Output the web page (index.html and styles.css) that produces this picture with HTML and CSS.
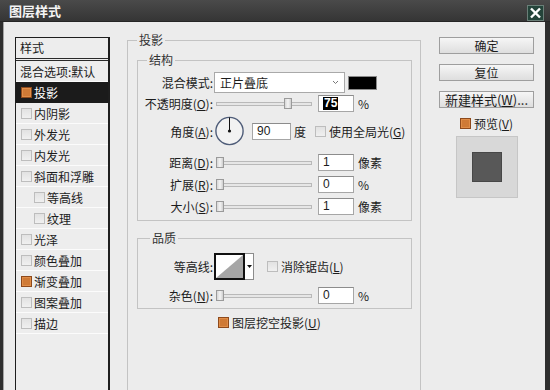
FILE: index.html
```html
<!DOCTYPE html>
<html lang="zh">
<head>
  <meta charset="UTF-8" />
  <title>图层样式</title>
  <link rel="stylesheet" href="styles.css">
</head>
<body>

  <!-- Title bar -->
  <div class="titlebar">
    <span class="title">图层样式</span>
    <span class="close">
      <svg width="13" height="12" viewBox="0 0 13 12">
        <path d="M2 1.5 L11 10.5 M11 1.5 L2 10.5" stroke="#fff" stroke-width="2.4" />
      </svg>
    </span>
  </div>

  <div class="dialog">

    <!-- Left: style list -->
    <div class="styles-list">
      <div class="list-head">样式</div>
      <div class="list-item">混合选项:默认</div>
      <div class="list-item selected"><span class="check on"></span>投影</div>
      <div class="list-item"><span class="check"></span>内阴影</div>
      <div class="list-item"><span class="check"></span>外发光</div>
      <div class="list-item"><span class="check"></span>内发光</div>
      <div class="list-item"><span class="check"></span>斜面和浮雕</div>
      <div class="list-item sub"><span class="check"></span>等高线</div>
      <div class="list-item sub"><span class="check"></span>纹理</div>
      <div class="list-item"><span class="check"></span>光泽</div>
      <div class="list-item"><span class="check"></span>颜色叠加</div>
      <div class="list-item"><span class="check on"></span>渐变叠加</div>
      <div class="list-item"><span class="check"></span>图案叠加</div>
      <div class="list-item"><span class="check"></span>描边</div>
    </div>

    <!-- Middle: drop shadow settings -->
    <div class="main">
      <fieldset class="group outer">
        <legend>投影</legend>

        <fieldset class="group structure">
          <legend>结构</legend>

          <div class="row row-blend">
            <span class="lbl">混合模式:</span>
            <div class="select">正片叠底
              <svg class="select-arrow" width="7" height="5" viewBox="0 0 7 5">
                <path d="M1 1 L3.5 3.5 L6 1" fill="none" stroke="#777" stroke-width="1" />
              </svg>
            </div>
            <span class="swatch"></span>
          </div>

          <div class="row row-opacity">
            <span class="lbl">不透明度(<u>O</u>):</span>
            <div class="slider"><span class="track"></span><span class="thumb" style="left: 68px"></span></div>
            <div class="field"><span class="sel-text">75</span></div>
            <span class="unit">%</span>
          </div>

          <div class="row row-angle">
            <span class="lbl">角度(<u>A</u>):</span>
            <svg class="dial" width="29" height="30" viewBox="0 0 29 30">
              <circle cx="14.5" cy="15" r="13.6" fill="#f2f2f2" stroke="#4e5c78" stroke-width="1.4" />
              <line x1="14.5" y1="15" x2="14.5" y2="1.5" stroke="#111" stroke-width="1" />
              <circle cx="14.5" cy="15" r="1.6" fill="#111" />
            </svg>
            <div class="field angle-field">90</div>
            <span class="unit">度</span>
            <span class="check global-check"></span>
            <span class="check-text">使用全局光(<u>G</u>)</span>
          </div>

          <div class="row row-slider first">
            <span class="lbl">距离(<u>D</u>):</span>
            <div class="slider"><span class="track"></span><span class="thumb" style="left: 0px"></span></div>
            <div class="field">1</div>
            <span class="unit">像素</span>
          </div>

          <div class="row row-slider">
            <span class="lbl">扩展(<u>R</u>):</span>
            <div class="slider"><span class="track"></span><span class="thumb" style="left: 0px"></span></div>
            <div class="field">0</div>
            <span class="unit">%</span>
          </div>

          <div class="row row-slider">
            <span class="lbl">大小(<u>S</u>):</span>
            <div class="slider"><span class="track"></span><span class="thumb" style="left: 0px"></span></div>
            <div class="field">1</div>
            <span class="unit">像素</span>
          </div>
        </fieldset>

        <fieldset class="group quality">
          <legend>品质</legend>

          <div class="row row-contour">
            <span class="lbl">等高线:</span>
            <div class="contour">
              <svg class="curve" width="27" height="23" viewBox="0 0 27 23">
                <rect width="27" height="23" fill="#fff" />
                <polygon points="0,23 27,0 27,23" fill="#a6a6a6" />
              </svg>
              <span class="contour-arrow">
                <svg width="5" height="3" viewBox="0 0 5 3"><polygon points="0,0 5,0 2.5,3" fill="#111" /></svg>
              </span>
            </div>
            <span class="check aa-check"></span>
            <span class="check-text">消除锯齿(<u>L</u>)</span>
          </div>

          <div class="row row-noise">
            <span class="lbl">杂色(<u>N</u>):</span>
            <div class="slider"><span class="track"></span><span class="thumb" style="left: 0px"></span></div>
            <div class="field">0</div>
            <span class="unit">%</span>
          </div>
        </fieldset>

        <div class="row knockout">
          <span class="check on"></span>
          <span class="check-text">图层挖空投影(<u>U</u>)</span>
        </div>
      </fieldset>
    </div>

    <!-- Right: buttons and preview -->
    <div class="side">
      <div class="btn">确定</div>
      <div class="btn">复位</div>
      <div class="btn btn-wide">新建样式(<u>W</u>)...</div>
      <div class="preview-toggle">
        <span class="check on"></span>
        <span class="check-text">预览(<u>V</u>)</span>
      </div>
      <div class="preview">
        <div class="preview-square"></div>
      </div>
    </div>

  </div>

</body>
</html>
```

FILE: styles.css
```css
* {
  box-sizing: border-box;
  margin: 0;
  padding: 0;
}

body {
  width: 550px;
  height: 390px;
  overflow: hidden;
  background: #2e2e2e;
  font-family: "Noto Sans CJK SC", "Noto Sans", sans-serif;
  font-size: 12px;
  color: #1c1c1c;
}

u {
  text-decoration: underline;
  text-underline-offset: 1px;
}

/* ---------- title bar ---------- */
.titlebar {
  height: 22px;
  display: flex;
  align-items: flex-start;
  background: linear-gradient(to bottom, #4a4a4a, #353535);
  border-bottom: 1px solid #262626;
}

.title {
  padding-left: 9px;
  line-height: 22px;
  font-size: 13px;
  font-weight: bold;
  color: #f4f4f4;
}

.close {
  margin-left: auto;
  margin-right: 6px;
  margin-top: 5px;
  width: 17px;
  height: 16px;
  display: flex;
  align-items: center;
  justify-content: center;
  background: #24443a;
  border: 1px solid #6a7f78;
}

/* ---------- dialog body ---------- */
.dialog {
  display: flex;
  align-items: flex-start;
  height: 368px;
  margin: 0 5px 0 3px;
  padding: 15px 11px 0 11px;
  background: #ececec;
  border-left: 1px solid #a4a4a4;
  overflow: hidden;
}

/* ---------- style list ---------- */
.styles-list {
  flex: none;
  width: 95px;
  height: 380px;
  border: 1px solid #1e1e1e;
  border-right-width: 2px;
  background: #ededed;
}

.list-head {
  height: 23px;
  padding-left: 4px;
  line-height: 20px;
  border-bottom: 3px double #2a2a2a;
}

.list-item {
  height: 21px;
  display: flex;
  align-items: center;
  padding-left: 4px;
  border-bottom: 1px solid #fbfbfb;
  white-space: nowrap;
}

.list-item .check {
  margin-left: 1px;
  margin-right: 2px;
}

.list-item.sub {
  padding-left: 17px;
}

.list-item.selected {
  background: #1b1b1b;
  color: #fff;
  border-bottom-color: #1b1b1b;
}

/* ---------- checkboxes ---------- */
.check {
  flex: none;
  display: inline-block;
  width: 11px;
  height: 11px;
  border: 1px solid #bdbdbd;
  background: linear-gradient(to bottom, #e2e2e2, #f0f0f0);
}

.check.on {
  border-color: #8e4a1c;
  background: #cf7a36;
  box-shadow: inset 0 0 0 1px #e08d48;
}

.check-text {
  margin-left: 3px;
  white-space: nowrap;
}

/* ---------- group boxes ---------- */
.main {
  flex: none;
  width: 294px;
  margin-left: 17px;
  margin-top: -4px;
}

.group {
  border: 1px solid #c3c3c3;
  min-inline-size: 0;
}

.group legend {
  padding: 0 2px;
  line-height: 14px;
  color: #333;
}

.outer {
  width: 294px;
  height: 380px;
  padding: 6px 8px 0 9px;
}

.structure {
  width: 275px;
  padding: 5px 0 5px 0;
}

.structure legend {
  margin-left: 9px;
}

.quality {
  width: 275px;
  margin-top: 10px;
  padding: 8px 0 4px 0;
}

.quality legend {
  margin-left: 12px;
}

/* ---------- rows ---------- */
.row {
  display: flex;
  align-items: center;
  white-space: nowrap;
}

.lbl {
  flex: none;
  width: 75px;
  text-align: right;
}

.row-blend {
  height: 21px;
}

.row-opacity {
  height: 17px;
  margin-top: 2px;
}

.row-angle {
  height: 30px;
  margin-top: 4px;
}

.row-slider {
  height: 17px;
  margin-top: 5px;
}

.row-slider.first {
  margin-top: 8px;
}

.row-contour {
  height: 27px;
}

.row-noise {
  height: 17px;
  margin-top: 7px;
}

.knockout {
  height: 14px;
  margin-top: 6px;
  padding-left: 81px;
}

/* select + swatch */
.select {
  flex: none;
  display: flex;
  align-items: center;
  width: 131px;
  height: 21px;
  margin-left: 1px;
  padding-left: 5px;
  background: #fff;
  border: 1px solid #a9a9a9;
}

.select-arrow {
  margin-left: auto;
  margin-right: 5px;
}

.swatch {
  flex: none;
  width: 29px;
  height: 14px;
  margin-left: 3px;
  background: #000;
  border: 1px solid #8a8a8a;
}

/* slider */
.slider {
  flex: none;
  position: relative;
  width: 96px;
  height: 13px;
  margin-left: 3px;
  display: flex;
  align-items: center;
}

.track {
  width: 100%;
  height: 4px;
  border: 1px solid #b9b9b9;
  background: #e6e6e6;
}

.thumb {
  position: absolute;
  top: 1px;
  width: 8px;
  height: 11px;
  border: 1px solid #9a9a9a;
  background: linear-gradient(to right, #d6d6d6, #f4f4f4 50%, #cfcfcf);
}

/* text fields */
.field {
  flex: none;
  width: 36px;
  height: 17px;
  margin-left: 6px;
  padding-left: 4px;
  line-height: 15px;
  background: #fff;
  border: 1px solid #a6a6a6;
  border-top-color: #8c8c8c;
  font-family: "Liberation Sans", "Noto Sans", sans-serif;
}

.sel-text {
  display: inline-block;
  background: #000;
  color: #fff;
  padding: 0 1px;
  line-height: 13px;
  font-weight: bold;
}

.unit {
  margin-left: 4px;
}

/* angle */
.dial {
  flex: none;
  margin-left: 2px;
}

.angle-field {
  width: 39px;
  margin-left: 8px;
}

.row-angle .unit {
  margin-left: 3px;
}

.global-check {
  margin-left: 9px;
}

/* contour */
.contour {
  flex: none;
  display: flex;
  height: 27px;
  margin-left: 1px;
}

.curve {
  display: block;
  width: 31px;
  height: 27px;
  border: 2px solid #111;
}

.contour-arrow {
  width: 9px;
  display: flex;
  align-items: center;
  justify-content: center;
  background: #fff;
  border: 1px solid #8c8c8c;
  border-left: none;
}

.aa-check {
  margin-left: 13px;
}

/* ---------- right side ---------- */
.side {
  flex: none;
  width: 95px;
  margin-left: 18px;
  display: flex;
  flex-direction: column;
  align-items: center;
}

.btn {
  width: 95px;
  height: 17px;
  margin-bottom: 10px;
  text-align: center;
  line-height: 15px;
  border: 1px solid #9e9e9e;
  background: linear-gradient(to bottom, #f6f6f6, #dedede);
  white-space: nowrap;
}

.btn-wide {
  font-size: 13px;
  margin-bottom: 0;
}

.preview-toggle {
  display: flex;
  align-items: center;
  height: 12px;
  margin-top: 9px;
}

.preview {
  width: 62px;
  height: 62px;
  margin-top: 7px;
  display: flex;
  align-items: center;
  justify-content: center;
  background: #d8d8d8;
  border: 1px solid #c6c6c6;
}

.preview-square {
  width: 30px;
  height: 30px;
  background: #585858;
  border: 1px solid #474747;
}
```
